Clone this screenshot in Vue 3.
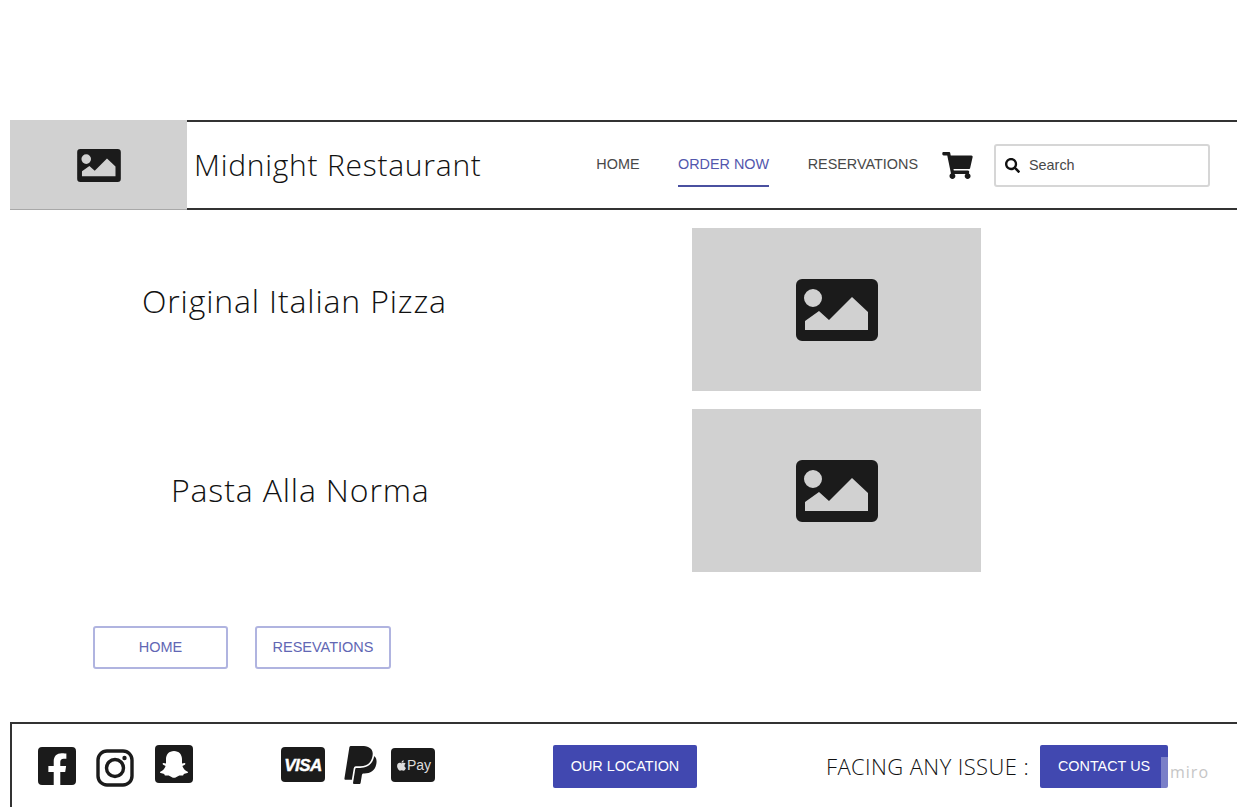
<template>
  <div class="page">
    <header class="header">
      <div class="logo">
        <svg class="pic-small" viewBox="0 0 82 62"><path :d="picPath" fill-rule="evenodd" /></svg>
      </div>
      <div class="header-main">
        <h1 class="brand">Midnight Restaurant</h1>
        <nav class="nav">
          <a v-for="item in navItems" :key="item" class="nav-link" :class="{ active: item === 'ORDER NOW' }">{{ item }}</a>
        </nav>
        <svg class="cart" viewBox="0 0 576 512"><path :d="cartPath" /></svg>
        <div class="search">
          <svg class="search-icon" viewBox="0 0 512 512"><path :d="searchPath" /></svg>
          <span>Search</span>
        </div>
      </div>
    </header>

    <main class="menu">
      <section v-for="dish in dishes" :key="dish.name" class="dish">
        <div class="dish-name" :style="{ paddingLeft: dish.left + 'px', paddingBottom: dish.lift + 'px' }">
          <h2>{{ dish.name }}</h2>
        </div>
        <div class="dish-pic">
          <svg class="pic-large" viewBox="0 0 82 62"><path :d="picPath" fill-rule="evenodd" /></svg>
        </div>
      </section>
    </main>

    <div class="links">
      <a class="outline-btn home-btn">HOME</a>
      <a class="outline-btn res-btn">RESEVATIONS</a>
    </div>

    <footer class="footer">
      <div class="social">
        <svg class="fb" viewBox="0 32 448 448"><path :d="facebookPath" /></svg>
        <svg class="insta" viewBox="0 0 38 38">
          <rect x="2" y="2" width="34" height="34" rx="9" fill="none" stroke="#1b1b1b" stroke-width="3.400" />
          <circle cx="19" cy="19" r="8.500" fill="none" stroke="#1b1b1b" stroke-width="3.400" />
          <circle cx="28.500" cy="9" r="2.200" fill="#1b1b1b" />
        </svg>
        <svg class="snap" viewBox="0 0 38 38">
          <rect width="38" height="38" rx="4" fill="#1b1b1b" />
          <path fill="#fff" d="M19 6c5 0 8 3.600 8 8v4.500l2.600-.6c1 .2 1 1.200.2 1.800l-2.400 1.300c.8 2.600 2.700 4.600 5.300 5.700.6.400.3 1-.4 1.300-1.200.4-2.600.6-3.400.9-.6.700-.4 1.700-1.400 1.700-1.700 0-3-.3-4.600.6-1.300.8-2.400 1.600-3.900 1.600s-2.600-.8-3.900-1.600c-1.600-.9-2.900-.6-4.600-.6-1 0-.8-1-1.400-1.700-.8-.3-2.200-.5-3.400-.9-.7-.3-1-.9-.4-1.300 2.600-1.100 4.500-3.100 5.300-5.700l-2.400-1.300c-.8-.6-.8-1.600.2-1.800l2.600.6V14c0-4.400 3-8 8-8z" />
        </svg>
      </div>
      <div class="payments">
        <svg class="visa" viewBox="0 0 44 35">
          <rect width="44" height="35" rx="4" fill="#1b1b1b" />
          <text x="22" y="23.500" text-anchor="middle" class="visa-text">VISA</text>
        </svg>
        <svg class="paypal" viewBox="0 29 384 454"><path :d="paypalPath" /></svg>
        <svg class="applepay" viewBox="0 0 44 34">
          <rect width="44" height="34" rx="4" fill="#1b1b1b" />
          <svg x="6" y="11.500" width="9" height="12" viewBox="0 0 384 512"><path fill="#ddd" :d="applePath" /></svg>
          <text x="16" y="22" class="pay-text">Pay</text>
        </svg>
      </div>
      <a class="solid-btn location-btn">OUR LOCATION</a>
      <span class="issue">FACING ANY ISSUE :</span>
      <a class="solid-btn contact-btn">CONTACT US</a>
    </footer>

    <div class="miro">
      <span class="miro-bar"></span>
      <span class="miro-text">miro</span>
    </div>
  </div>
</template>

<script setup>
const navItems = ['HOME', 'ORDER NOW', 'RESERVATIONS']

const dishes = [
  { name: 'Original Italian Pizza', left: 132, lift: 18 },
  { name: 'Pasta Alla Norma', left: 161, lift: 2 },
]

const picPath = 'M6 0H76A6 6 0 0 1 82 6V56A6 6 0 0 1 76 62H6A6 6 0 0 1 0 56V6A6 6 0 0 1 6 0ZM17 10A9 9 0 1 0 17 28A9 9 0 1 0 17 10ZM9 51H72V33L56 18L33 41L23 32L9 42Z'
const cartPath = 'M528.12 301.319l47.273-208C578.806 78.301 567.391 64 551.99 64H159.208l-9.166-44.81C147.758 8.021 137.93 0 126.529 0H24C10.745 0 0 10.745 0 24v16c0 13.255 10.745 24 24 24h69.883l70.248 343.435C147.325 417.1 136 435.222 136 456c0 30.928 25.072 56 56 56s56-25.072 56-56c0-15.674-6.447-29.835-16.824-40h209.647C430.447 426.165 424 440.326 424 456c0 30.928 25.072 56 56 56s56-25.072 56-56c0-22.172-12.888-41.332-31.579-50.405l5.517-24.276c3.413-15.018-8.002-29.319-23.403-29.319H218.117l-6.545-32h293.145c11.206 0 20.92-7.754 23.403-18.681z'
const searchPath = 'M505 442.7L405.3 343c-4.5-4.5-10.6-7-17-7H372c27.6-35.3 44-79.7 44-128C416 93.1 322.9 0 208 0S0 93.1 0 208s93.1 208 208 208c48.3 0 92.7-16.4 128-44v16.3c0 6.4 2.5 12.5 7 17l99.7 99.7c9.4 9.4 24.6 9.4 33.9 0l28.3-28.3c9.4-9.4 9.4-24.6.1-34zM208 336c-70.7 0-128-57.2-128-128 0-70.7 57.2-128 128-128 70.7 0 128 57.2 128 128 0 70.7-57.2 128-128 128z'
const facebookPath = 'M400 32H48A48 48 0 0 0 0 80v352a48 48 0 0 0 48 48h137.25V327.69h-63V256h63v-54.64c0-62.15 37-96.48 93.67-96.48 27.14 0 55.52 4.84 55.52 4.84v61h-31.27c-30.81 0-40.42 19.12-40.42 38.73V256h68.78l-11 71.69h-57.78V480H400a48 48 0 0 0 48-48V80a48 48 0 0 0-48-48z'
const paypalPath = 'M111.4 295.9c-3.5 19.2-17.4 108.7-21.5 134-.3 1.8-1 2.5-3 2.5H12.3c-7.6 0-13.1-6.6-12.1-13.9L58.8 46.6c1.5-9.6 10.1-16.9 20-16.9 152.3 0 165.1-3.7 204 11.4 60.1 23.3 65.6 79.5 44 140.3-21.5 62.6-72.5 89.5-140.1 90.3-43.4.7-69.5-7-75.3 24.2zM357.1 152c-1.8-1.3-2.5-1.8-3 1.3-2 11.4-5.1 22.5-8.8 33.6-39.9 113.8-150.5 103.9-204.5 103.9-6.1 0-10.1 3.3-10.9 9.4-22.6 140.4-27.1 169.7-27.1 169.7-1 7.1 3.5 12.9 10.6 12.9h63.5c8.6 0 15.7-6.3 17.4-14.9.7-5.4-1.1 6.1 14.4-91.3 4.6-22 14.3-19.7 29.3-19.7 71 0 126.4-28.8 142.9-112.3 6.5-34.8 4.6-71.4-23.8-92.6z'
const applePath = 'M318.7 268.7c-.2-36.7 16.4-64.4 50-84.8-18.8-26.9-47.2-41.7-84.7-44.6-35.5-2.8-74.3 20.7-88.5 20.7-15 0-49.4-19.7-76.4-19.7C63.3 141.2 4 184.8 4 273.5q0 39.3 14.4 81.2c12.8 36.7 59 126.7 107.2 125.2 25.2-.6 43-17.9 75.8-17.9 31.8 0 48.3 17.9 76.4 17.9 48.6-.7 90.4-82.5 102.6-119.3-65.2-30.7-61.7-90-61.7-91.9zm-56.6-164.2c27.3-32.4 24.8-61.9 24-72.5-24.1 1.4-52 16.4-67.9 34.9-17.5 19.8-27.8 44.3-25.6 71.9 26.1 2 49.9-11.4 69.5-34.3z'
</script>

<style>
html, body {
  margin: 0;
  background: #ffffff;
  overflow: hidden;
}
</style>

<style scoped>
.page {
  position: relative;
  width: 1237px;
  height: 807px;
  box-sizing: border-box;
  padding: 120px 0 0 10px;
  overflow: hidden;
  font-family: "Liberation Sans", Arial, sans-serif;
  color: #1b1b1b;
}

.header {
  display: flex;
  height: 90px;
}
.logo {
  width: 177px;
  flex: none;
  display: flex;
  align-items: center;
  justify-content: center;
  padding-top: 2px;
  background: #d1d1d1;
  box-sizing: border-box;
  border-bottom: 1px solid #a8a8a8;
}
.pic-small {
  width: 44px;
  height: 33px;
  fill: #1b1b1b;
}
.header-main {
  flex: 1;
  display: flex;
  align-items: center;
  box-sizing: border-box;
  border-top: 2px solid #333;
  border-bottom: 2px solid #333;
  padding: 0 27px 0 7px;
}
.brand {
  margin: 0 0 2px;
  font: 300 30px "Open Sans", sans-serif;
  letter-spacing: 0.75px;
  color: #111;
}
.nav {
  display: flex;
  gap: 38.500px;
  margin-left: auto;
}
.nav-link {
  padding: 11px 0 13px;
  border-top: 2px solid transparent;
  border-bottom: 2px solid transparent;
  font-size: 14.4px;
  line-height: 16px;
  color: #484848;
}
.nav-link.active {
  color: #5257ad;
  border-bottom-color: #4a50a0;
}
.cart {
  width: 31px;
  height: 27px;
  margin-left: 24px;
  fill: #1b1b1b;
}
.search {
  width: 216px;
  height: 43px;
  margin-left: 21px;
  box-sizing: border-box;
  display: flex;
  align-items: center;
  gap: 9px;
  padding-left: 9px;
  border: 2px solid #d6d6d6;
  border-radius: 3px;
  font-size: 14.4px;
  color: #484848;
}
.search-icon {
  width: 15px;
  height: 15px;
  fill: #111;
}

.menu {
  display: flex;
  flex-direction: column;
  gap: 18px;
  margin-top: 18px;
}
.dish {
  display: flex;
  height: 163px;
}
.dish-name {
  width: 682px;
  flex: none;
  box-sizing: border-box;
  display: flex;
  align-items: center;
}
.dish-name h2 {
  margin: 0;
  font: 300 32px "Open Sans", sans-serif;
  letter-spacing: 0.85px;
  color: #111;
}
.dish-pic {
  width: 289px;
  display: flex;
  align-items: center;
  justify-content: center;
  background: #d1d1d1;
}
.pic-large {
  width: 82px;
  height: 62px;
  fill: #1b1b1b;
}

.links {
  display: flex;
  gap: 27px;
  margin: 54px 0 0 83px;
}
.outline-btn {
  height: 43px;
  box-sizing: border-box;
  display: flex;
  align-items: center;
  justify-content: center;
  padding-bottom: 2px;
  border: 2px solid #b0b4e0;
  border-radius: 3px;
  font-size: 14.5px;
  color: #6267b4;
}
.home-btn {
  width: 135px;
}
.res-btn {
  width: 136px;
}

.footer {
  display: flex;
  align-items: center;
  height: 85px;
  margin-top: 53px;
  padding: 0 0 0 26px;
  box-sizing: border-box;
  border-top: 2px solid #333;
  border-left: 2px solid #333;
}
.social {
  display: flex;
  align-items: flex-start;
  gap: 20px;
}
.fb {
  width: 38px;
  height: 38px;
  margin-top: 2px;
  fill: #1b1b1b;
}
.insta {
  width: 38px;
  height: 38px;
  margin-top: 4px;
}
.snap {
  width: 38px;
  height: 38px;
  margin-left: 1px;
}
.payments {
  display: flex;
  align-items: center;
  margin: -2px 0 0 88px;
}
.visa {
  width: 44px;
  height: 35px;
}
.visa-text {
  fill: #fff;
  font: italic 700 17px "Liberation Sans", sans-serif;
  letter-spacing: -0.5px;
  stroke: #fff;
  stroke-width: 0.4px;
}
.paypal {
  width: 33px;
  height: 38px;
  margin-left: 19px;
  fill: #1b1b1b;
}
.applepay {
  width: 44px;
  height: 34px;
  margin-left: 14px;
}
.pay-text {
  fill: #ddd;
  font: 400 14px "Liberation Sans", sans-serif;
}
.solid-btn {
  height: 43px;
  box-sizing: border-box;
  display: flex;
  align-items: center;
  justify-content: center;
  padding-bottom: 1px;
  background: #4148b0;
  border-radius: 2px;
  color: #fff;
  font-size: 14.4px;
}
.location-btn {
  width: 144px;
  margin: 1px 0 0 118px;
}
.issue {
  margin: 1px 0 0 129px;
  font: 300 22px "Open Sans", sans-serif;
  letter-spacing: 0.4px;
  color: #111;
}
.contact-btn {
  width: 128px;
  margin: 1px 0 0 11px;
}

.miro {
  position: absolute;
  left: 1161px;
  top: 757px;
  display: flex;
}
.miro-bar {
  width: 7px;
  height: 31px;
  background: rgba(255, 255, 255, 0.3);
}
.miro-text {
  margin: 4px 0 0 2px;
  font: 400 16px "Open Sans", sans-serif;
  letter-spacing: 1px;
  color: #c6c6c6;
}
</style>
